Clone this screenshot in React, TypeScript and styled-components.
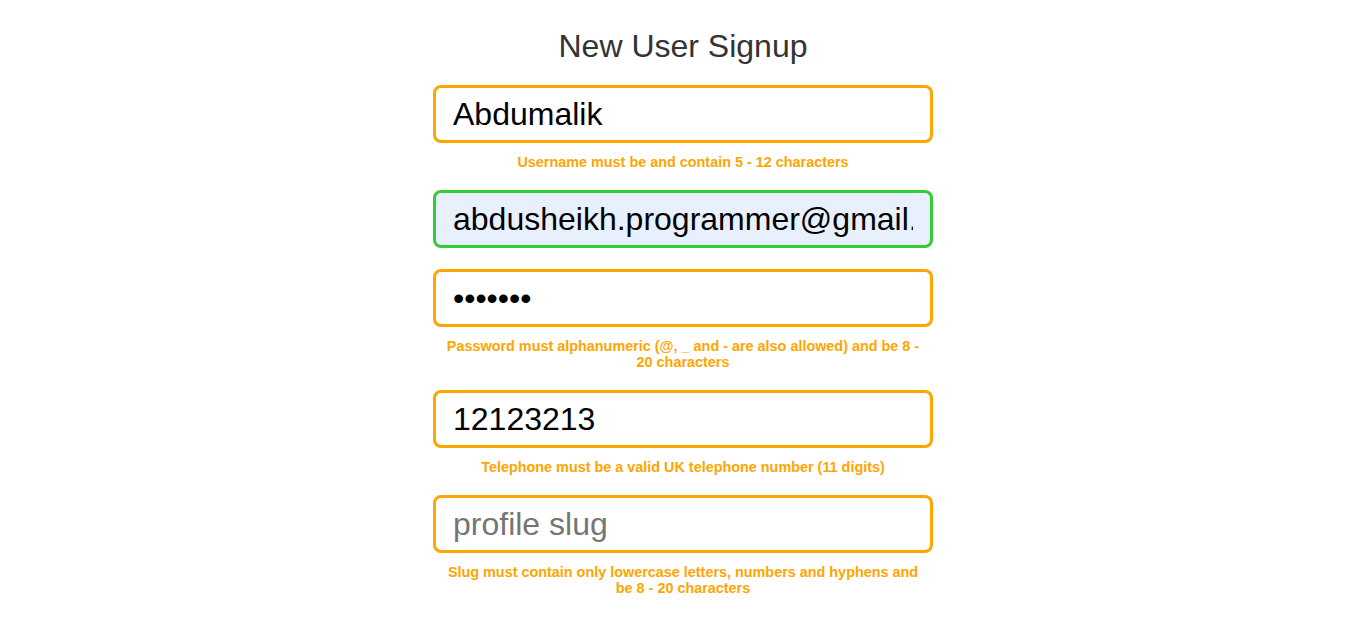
import * as React from "react";
import styled, { createGlobalStyle } from "styled-components";

type Field = {
  name: string;
  type: string;
  placeholder: string;
  value?: string;
  valid?: boolean;
  error?: string;
};

const fields: Field[] = [
  {
    name: "username",
    type: "text",
    placeholder: "username",
    value: "Abdumalik",
    error: "Username must be and contain 5 - 12 characters",
  },
  {
    name: "email",
    type: "email",
    placeholder: "email",
    value: "abdusheikh.programmer@gmail.com",
    valid: true,
  },
  {
    name: "password",
    type: "password",
    placeholder: "password",
    value: "1234567",
    error: "Password must alphanumeric (@, _ and - are also allowed) and be 8 - 20 characters",
  },
  {
    name: "telephone",
    type: "tel",
    placeholder: "telephone",
    value: "12123213",
    error: "Telephone must be a valid UK telephone number (11 digits)",
  },
  {
    name: "slug",
    type: "text",
    placeholder: "profile slug",
    error: "Slug must contain only lowercase letters, numbers and hyphens and be 8 - 20 characters",
  },
];

const App: React.FC = () => {
  return (
    <>
      <GlobalStyle />
      <StyledPage>
        <StyledTitle>New User Signup</StyledTitle>
        <StyledForm onSubmit={(e) => e.preventDefault()}>
          {fields.map((field) => (
            <StyledGroup key={field.name}>
              <StyledInput
                name={field.name}
                type={field.type}
                placeholder={field.placeholder}
                defaultValue={field.value}
                $valid={field.valid}
              />
              {field.error && <StyledError>{field.error}</StyledError>}
            </StyledGroup>
          ))}
        </StyledForm>
      </StyledPage>
    </>
  );
};

export default App;

const GlobalStyle = createGlobalStyle`
  body {
    margin: 0;
    background: #fff;
    font-family: "Liberation Sans", Arial, sans-serif;
  }
`;

const StyledPage = styled.div`
  display: flex;
  flex-direction: column;
  align-items: center;
  padding-top: 28px;
`;

const StyledTitle = styled.h1`
  margin: 0 0 20px;
  font-size: 32px;
  font-weight: 400;
  line-height: 37px;
  color: #333;
`;

const StyledForm = styled.form`
  display: flex;
  flex-direction: column;
  gap: 21px;
  width: 500px;
`;

const StyledGroup = styled.div`
  display: flex;
  flex-direction: column;
`;

const StyledInput = styled.input<{ $valid?: boolean }>`
  box-sizing: border-box;
  width: 100%;
  height: 58px;
  padding: 0 17px;
  border: 3px solid ${({ $valid }) => ($valid ? "#32cd32" : "#ffa500")};
  border-radius: 8px;
  background: ${({ $valid }) => ($valid ? "#e8f0fe" : "#fff")};
  font-family: "Liberation Sans", Arial, sans-serif;
  font-size: 32px;
  color: #000;
  outline: none;

  &::placeholder {
    color: #757575;
  }
`;

const StyledError = styled.p`
  margin: 11px 0 -1px;
  padding: 0 10px;
  font-size: 14.4px;
  font-weight: 700;
  line-height: 16px;
  text-align: center;
  color: #ffa500;
`;
